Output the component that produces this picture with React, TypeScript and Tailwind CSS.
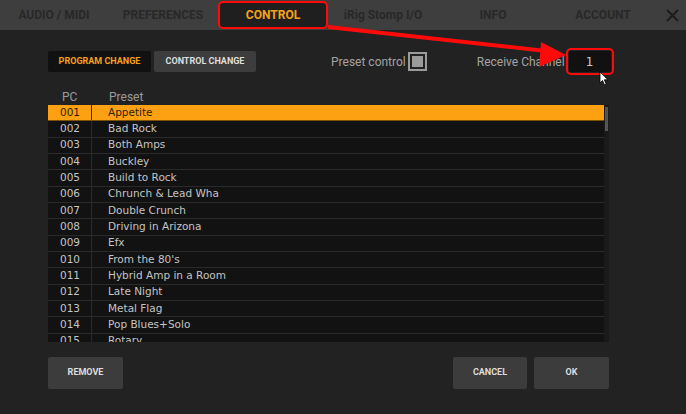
import React from "react";

const presets: [string, string][] = [
  ["001", "Appetite"],
  ["002", "Bad Rock"],
  ["003", "Both Amps"],
  ["004", "Buckley"],
  ["005", "Build to Rock"],
  ["006", "Chrunch & Lead Wha"],
  ["007", "Double Crunch"],
  ["008", "Driving in Arizona"],
  ["009", "Efx"],
  ["010", "From the 80's"],
  ["011", "Hybrid Amp in a Room"],
  ["012", "Late Night"],
  ["013", "Metal Flag"],
  ["014", "Pop Blues+Solo"],
  ["015", "Rotary"],
];

const tabs = ["AUDIO / MIDI", "PREFERENCES", "CONTROL", "iRig Stomp I/O", "INFO", "ACCOUNT"];

const roboto = { fontFamily: "Roboto, 'Liberation Sans', sans-serif" };
const dejavu = { fontFamily: "'DejaVu Sans', 'Liberation Sans', sans-serif" };

const App: React.FC = () => {
  return (
    <div className="relative w-[686px] h-[414px] bg-[#222222] overflow-hidden" style={roboto}>
      {/* top nav */}
      <div className="flex items-center h-[30px] bg-[#3e3e3e]">
        {tabs.map((t, i) =>
          t === "CONTROL" ? (
            <div key={t} className="w-[110px] flex justify-center">
              <div className="w-[111px] h-[28px] rounded-[5px] border-2 border-[#ff0a0a] bg-[#1f1f1f] flex items-center justify-center text-[12px] font-bold text-[#f7a11a]">
                {t}
              </div>
            </div>
          ) : (
            <div
              key={t}
              className={`${i === 0 ? "w-[108px]" : "w-[110px]"} text-center text-[12px] font-bold text-[#282828]`}
            >
              {t}
            </div>
          )
        )}
        <div className="flex-1 flex justify-center">
          <svg width="13" height="13" viewBox="0 0 13 13">
            <path d="M1 1 L12 12 M12 1 L1 12" stroke="#1c1c1c" strokeWidth="2" />
          </svg>
        </div>
      </div>

      <div className="pl-[48px] pr-[77px] pt-[21px]">
        {/* controls row */}
        <div className="flex items-center h-[21px] whitespace-nowrap">
          <div className="shrink-0 w-[103px] h-[21px] bg-[#111111] rounded-[2px] flex items-center justify-center text-[9px] font-bold text-[#f7a11a]">
            PROGRAM CHANGE
          </div>
          <div className="shrink-0 ml-[3px] w-[102px] h-[21px] bg-[#3d3d3d] rounded-[2px] flex items-center justify-center text-[9px] font-bold text-[#dddddd]">
            CONTROL CHANGE
          </div>
          <span className="shrink-0 ml-[75px] text-[12px] text-[#a3a3a3]">Preset control</span>
          <div className="shrink-0 ml-[2px] w-[19px] h-[19px] border-2 border-[#9b9b9b] p-[2px]">
            <div className="w-full h-full bg-[#9b9b9b]" />
          </div>
          <span className="shrink-0 ml-[50px] text-[12px] text-[#a3a3a3]">Receive Channel</span>
          <div className="shrink-0 ml-[1px] w-[48px] h-[27px] rounded-[5px] border-[2.5px] border-[#ff0a0a] p-[1px]">
            <div className="w-full h-full bg-[#111111] flex items-center justify-center text-[12px] text-[#cccccc]" style={dejavu}>
              1
            </div>
          </div>
        </div>

        {/* table header */}
        <div className="flex mt-[16px] h-[17px] items-center text-[12px] text-[#9a9a9a]">
          <span className="w-[44px] pl-[14px]">PC</span>
          <span className="pl-[17px]">Preset</span>
        </div>

        {/* list */}
        <div className="flex h-[237px] bg-[#121212] overflow-hidden">
          <div className="flex-1" style={dejavu}>
            {presets.map(([pc, name], i) => (
              <div
                key={pc}
                className={`flex h-[16.33px] items-center text-[10.5px] border-b ${
                  i === 0
                    ? "bg-[#fda011] text-[#2a1f06] border-[#7a5208]"
                    : "text-[#c4c4c4] border-[#2a2a2a]"
                }`}
              >
                <span
                  className={`w-[44px] h-full flex items-center pl-[12px] border-r ${
                    i === 0 ? "border-[#3a2a08]" : "border-[#2a2a2a]"
                  }`}
                >
                  {pc}
                </span>
                <span className="pl-[16px]">{name}</span>
              </div>
            ))}
          </div>
          <div className="w-[5px] bg-[#1a1a1a] pt-[2px]">
            <div className="mx-auto w-[3px] h-[24px] bg-[#555555]" />
          </div>
        </div>

        {/* bottom buttons */}
        <div className="flex mt-[15px] items-center">
          <button className="w-[75px] h-[32px] bg-[#3c3c3c] rounded-[2px] text-[9px] font-bold text-[#dddddd]">
            REMOVE
          </button>
          <div className="flex-1" />
          <button className="w-[74px] h-[32px] bg-[#3c3c3c] rounded-[2px] text-[9px] font-bold text-[#dddddd]">
            CANCEL
          </button>
          <button className="ml-[7px] w-[75px] h-[32px] bg-[#3c3c3c] rounded-[2px] text-[9px] font-bold text-[#dddddd]">
            OK
          </button>
        </div>
      </div>

      {/* red annotation arrow */}
      <svg className="absolute left-0 top-0 pointer-events-none" width="686" height="414">
        <line x1="328" y1="27" x2="546" y2="51" stroke="#ff0a0a" strokeWidth="4" />
        <polygon points="541,42 566,55 539,67" fill="#ff0a0a" />
      </svg>

      {/* mouse cursor */}
      <svg className="absolute left-[599px] top-[71px]" width="11" height="15" viewBox="0 0 11 15">
        <path d="M1 1 L1 12 L3.5 9.5 L5.5 14 L7.2 13.2 L5.3 8.8 L9 8.8 Z" fill="#ffffff" stroke="#000000" strokeWidth="0.8" />
      </svg>
    </div>
  );
};

export default App;
